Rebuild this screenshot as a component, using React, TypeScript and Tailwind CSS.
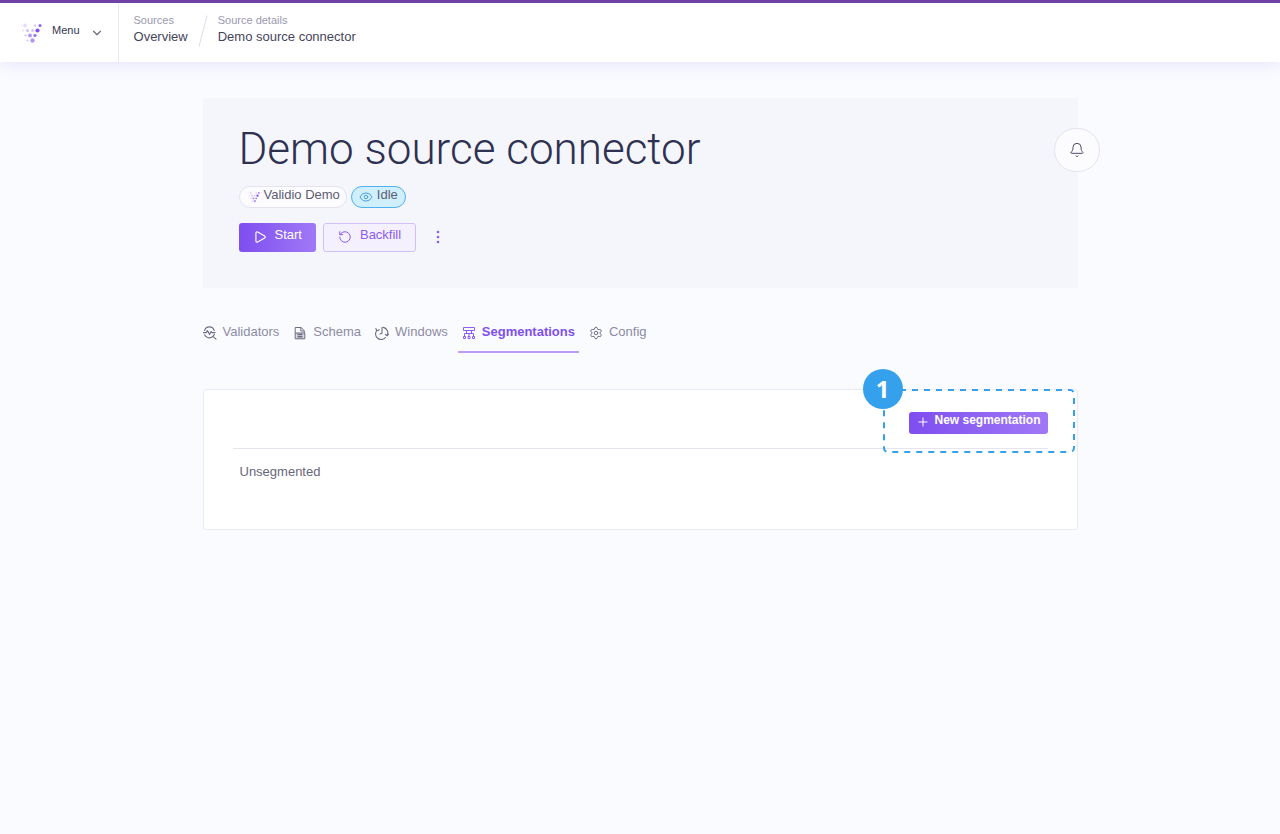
import type { ReactNode } from "react";
import { Bell, ChevronDown, Eye, Play, Plus, RotateCcw, Settings } from "lucide-react";

type IconProps = { className?: string };

// x, y, radius, opacity
const LOGO_DOTS = [
    [1.5, 2.5, 0.8, 0.15], [5, 2.5, 1.9, 0.2], [15, 2.5, 1, 0.45], [20, 2.5, 1.5, 0.9],
    [3, 7.5, 1, 0.2], [7.5, 7.5, 1.6, 0.35], [12.5, 7.5, 1.2, 0.45], [17.5, 7.5, 2.1, 1],
    [5.5, 12.5, 1.1, 0.35], [10, 12.5, 1.9, 0.6], [15, 12.5, 1.7, 0.75],
    [7.5, 17.5, 1, 0.35], [12.5, 17.5, 2.2, 0.6],
];

const Logo = ({ className }: IconProps) => (
    <svg viewBox="0 0 22 20" className={className} fill="#8250ef" aria-hidden="true">
        {LOGO_DOTS.map(([x, y, r, opacity]) => <circle key={`${x}-${y}`} cx={x} cy={y} r={r} opacity={opacity}/>)}
    </svg>
)

const ValidatorsIcon = () => (
    <svg viewBox="0 0 14 14" className="size-3.5" fill="none" stroke="currentColor" strokeLinecap="round" strokeLinejoin="round" aria-hidden="true">
        <path d="M1.6 4.5a5 5 0 0 1 9.6 0M1.6 8.8a5 5 0 0 0 8.2 1.6L13 13.2M11.3 8.3a5 5 0 0 1-1.5 2.1M.5 6.6h2.6l1.3-2 2.2 3.8 1.5-2.8.9 1H12" strokeWidth="1.1"/>
    </svg>
)

const SchemaIcon = () => (
    <svg viewBox="0 0 14 14" className="size-3.5" fill="none" stroke="currentColor" strokeLinejoin="round" aria-hidden="true">
        <path d="M2.2 7V1.5h5.8l3.3 3.2V7M7.8 1.5V5h3.5"/>
        <path d="M2.2 7v5.8h9.6V7z" fill="currentColor" fillOpacity="0.25"/>
        <path d="M4.5 8.5h5M4.5 10.8h5" strokeWidth="1.6"/>
    </svg>
)

const WindowsIcon = () => (
    <svg viewBox="0 0 14 14" className="size-3.5" fill="none" stroke="currentColor" strokeLinecap="round" strokeLinejoin="round" aria-hidden="true">
        <path d="M8.3 1.4a5.5 5.5 0 0 1 3.9 7.8M10.4 11.5a5.5 5.5 0 0 1-8.6-7M.8 2.6l1.3 2.2 2.2-1M13.6 8.2l-1.5 1.6-1.7-1.3M7 1.2v6l-2 .9" strokeWidth="1.1"/>
    </svg>
)

const SegmentationsIcon = () => (
    <svg viewBox="0 0 14 14" className="size-3.5" fill="none" stroke="currentColor" strokeWidth="0.9" aria-hidden="true">
        <path d="M1.5 1.5h11v3h-11zM2.5 10.5v-3h9v3M4.5 4.5v3M9.5 4.5v3M7 7.5v3"/>
        <path d="M1.5 10.5h2v2h-2zM6 10.5h2v2H6zM10.5 10.5h2v2h-2z"/>
    </svg>
)

type TabProps = {
    label: string;
    icon: ReactNode;
    active?: boolean;
}

const Tab = ({ label, icon, active }: TabProps) => (
    <a
        href="#"
        aria-current={active ? "page" : undefined}
        className={`flex h-8 items-start gap-1.5 border-b-2 px-1 pt-px text-[13px] leading-5 ${active ? "border-[#bb9cf8] font-bold text-[#7f4ff0]" : "border-transparent text-[#8c8ba4]"}`}
    >
        <span className={active ? "pt-1" : "pt-1 text-[#6d6c84]"}>{icon}</span>
        {label}
    </a>
)

type CrumbProps = {
    section: string;
    page: string;
}

const Crumb = ({ section, page }: CrumbProps) => (
    <div className="flex flex-col pt-[9px]">
        <span className="text-[11px] leading-4 text-[#9a99b0]">{section}</span>
        <a href="#" className="text-[13px] leading-[17px] text-[#45455c]">{page}</a>
    </div>
)

const Header = () => (
    <header className="flex h-[62px] border-t-3 border-[#6f42a8] bg-white shadow-[0_3px_14px_rgba(110,90,240,0.13)]">
        <button className="flex items-center border-r border-[#e8e7f3] pr-3.5 pl-5 text-[11px] text-[#35354d]">
            <Logo className="h-5 w-[22px]"/>
            <span className="ml-2.5 pb-1">Menu</span>
            <ChevronDown className="ml-2.5 size-3.5 text-[#6a6a80]" strokeWidth={2}/>
        </button>
        <nav aria-label="Breadcrumb" className="flex pl-[15px]">
            <Crumb section="Sources" page="Overview"/>
            <svg viewBox="0 0 10 32" className="mx-2.5 mt-3 h-8 w-2.5" stroke="#dddce9" aria-hidden="true">
                <path d="M9 0.5L1 31.5"/>
            </svg>
            <Crumb section="Source details" page="Demo source connector"/>
        </nav>
    </header>
)

const Hero = () => (
    <section className="flex min-h-[190px] justify-between bg-[#f5f6fc] pt-[26px] pl-9">
        <div>
            <h1 className="font-[Roboto,sans-serif] text-[44px] leading-[50px] font-light text-[#2e3150]">Demo source connector</h1>
            <div className="mt-3 flex gap-1">
                <span className="flex h-[22px] items-start gap-1 rounded-full border border-[#e4e3ef] bg-[#fcfcff] px-1.5 pl-2 text-[13px] leading-4 text-[#5d5d73]">
                    <Logo className="mt-1 h-3 w-3"/>
                    Validio Demo
                </span>
                <span className="flex h-[22px] items-start gap-1 rounded-full border border-[#4fb0f2] bg-[#d0effd] px-[7px] text-[13px] leading-4 text-[#5d5d73]">
                    <Eye className="mt-[3px] size-3.5 text-[#4a9fdc]" strokeWidth={1.7}/>
                    Idle
                </span>
            </div>
            <div className="mt-[15px] flex">
                <button className="flex h-[29px] items-start gap-2 rounded-[3px] bg-linear-to-r from-[#7f4df0] to-[#a078f6] px-3.5 pt-1 text-[13px] leading-4 text-white">
                    <Play className="mt-[3px] size-3.5" strokeWidth={2}/>
                    Start
                </button>
                <button className="ml-[7px] flex h-[29px] items-start gap-2 rounded-[3px] border border-[#d2c0fa] bg-[#f5f0fe] px-3.5 pt-[3px] text-[13px] leading-4 text-[#8b5cf2]">
                    <RotateCcw className="mt-[3px] size-3.5" strokeWidth={1.7}/>
                    Backfill
                </button>
                <button aria-label="More actions" className="ml-3.5 flex h-7 w-4 items-center justify-center text-[#8b5cf2]">
                    <svg viewBox="0 0 4 14" className="h-3.5 w-1" fill="currentColor" aria-hidden="true">
                        <circle cx="2" cy="2" r="1.3"/>
                        <circle cx="2" cy="7" r="1.3"/>
                        <circle cx="2" cy="12" r="1.3"/>
                    </svg>
                </button>
            </div>
        </div>
        <button aria-label="Notifications" className="mt-1 -mr-[22px] flex h-11 w-[46px] items-center justify-center rounded-full border border-[#e4e3ee] bg-[#fcfcff] text-[#4c4c68]">
            <Bell className="size-4" strokeWidth={1.5}/>
        </button>
    </section>
)

const Callout = () => (
    <div className="pointer-events-none absolute -top-px right-0.5 h-16 w-48">
        <svg viewBox="0 0 192 64" className="size-full" fill="none" stroke="#35a0ec" strokeWidth="2" aria-hidden="true">
            <rect x="1" y="1" width="190" height="62" rx="4" strokeDasharray="6 6"/>
        </svg>
        <span className="absolute -top-5 -left-5 flex size-10 items-center justify-center rounded-full bg-[#35a0ec] font-['Noto_Sans',sans-serif] text-2xl font-bold text-white">1</span>
    </div>
)

const SegmentationList = () => (
    <section className="relative mt-9 min-h-[141px] rounded-[3px] border border-[#ebe9f8] bg-white px-[29px] pt-[22px]">
        <div className="flex justify-end border-b border-[#e5e4ee] pb-3.5">
            <button className="flex h-[22px] items-start gap-1 rounded-[3px] bg-linear-to-r from-[#7f4df0] to-[#a078f6] px-[7px] text-xs leading-4 font-bold text-white">
                <Plus className="mt-[3px] size-3.5" strokeWidth={1.7}/>
                New segmentation
            </button>
        </div>
        <ul>
            <li className="px-[7px] py-[15px] text-[13px] leading-4 text-[#67677b]">Unsegmented</li>
        </ul>
        <Callout/>
    </section>
)

export default function App() {
    return <div className="min-h-screen bg-[#fafbff] font-['Liberation_Sans',Arial,sans-serif]">
        <Header/>
        <main className="mx-auto w-full max-w-[875px] pt-9">
            <Hero/>
            <nav aria-label="Source" className="mt-[33px] -ml-1 flex gap-1.5">
                <Tab label="Validators" icon={<ValidatorsIcon/>}/>
                <Tab label="Schema" icon={<SchemaIcon/>}/>
                <Tab label="Windows" icon={<WindowsIcon/>}/>
                <Tab label="Segmentations" icon={<SegmentationsIcon/>} active/>
                <Tab label="Config" icon={<Settings className="size-3.5" strokeWidth={1.7}/>}/>
            </nav>
            <SegmentationList/>
        </main>
    </div>
}
